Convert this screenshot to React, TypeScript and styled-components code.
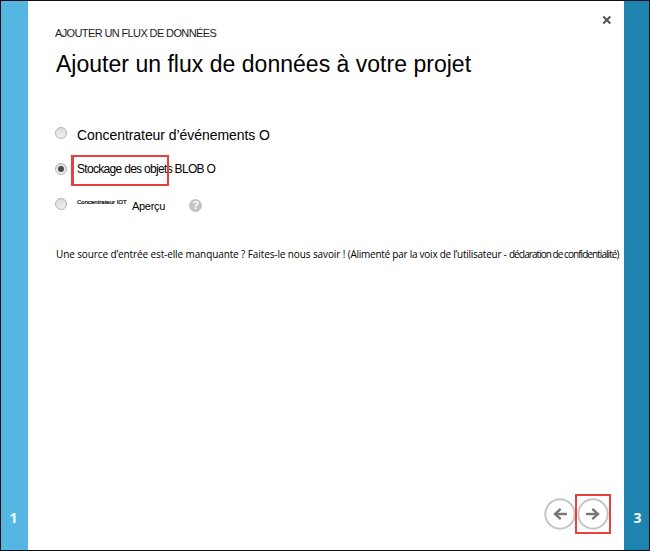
import React from "react";
import styled, { createGlobalStyle } from "styled-components";

const GlobalStyle = createGlobalStyle`
  body { margin: 0; background: #fff; }
  *, *::before, *::after { box-sizing: border-box; }
`;

const Dialog = styled.div`
  width: 650px;
  height: 551px;
  display: grid;
  grid-template-columns: 27px 1fr 25px;
  border: 1px solid #101014;
  background: #fff;
  color: #000;
  font-family: "Liberation Sans", Arial, sans-serif;
`;

const StepBar = styled.aside<{ $color: string; $left?: number; $right?: number }>`
  display: flex;
  align-items: flex-end;
  justify-content: center;
  padding: 0 ${(p) => p.$right ?? 0}px 22px ${(p) => p.$left ?? 0}px;
  background: ${(p) => p.$color};
  color: #f3fbff;
  font: 700 14px/20px "Open Sans", "Noto Sans", sans-serif;
`;

const Panel = styled.main`
  display: flex;
  flex-direction: column;
  padding: 0 13px 16px 27px;
  min-width: 0;
`;

const TopRow = styled.div`
  display: flex;
  justify-content: space-between;
  height: 40px;
`;

const Line = styled.span<{ $size: number; $spacing?: number; $font?: string }>`
  display: block;
  white-space: pre;
  font-size: ${(p) => p.$size}px;
  letter-spacing: ${(p) => p.$spacing ?? 0}px;
  ${(p) => p.$font && `font-family: ${p.$font};`}
`;

const Eyebrow = styled(Line)`
  padding-top: 25px;
  line-height: 15px;
  color: #1c1c1c;
`;

const CloseButton = styled.button`
  width: 10px;
  height: 10px;
  margin: 14px -1px 0 0;
  padding: 0;
  border: 0;
  background: none;
  display: flex;
`;

const Title = styled.h1`
  margin: 8px 0 0 1px;
  font-weight: 400;
  font-size: 23px;
  line-height: 30px;
  letter-spacing: 0.02px;
  white-space: nowrap;
`;

const Options = styled.div`
  display: flex;
  flex-direction: column;
  margin-top: 38px;
`;

const Option = styled.label<{ $height: number }>`
  display: flex;
  align-items: center;
  height: ${(p) => p.$height}px;
`;

const Radio = styled.span<{ $checked?: boolean }>`
  flex: none;
  display: grid;
  place-items: center;
  width: 12px;
  height: 12px;
  margin-right: 10px;
  border: 1px solid #b4b4b4;
  border-radius: 50%;
  background: linear-gradient(#dcdcdc, #f0f0f0);
  &::after {
    content: "";
    width: 6px;
    height: 6px;
    border-radius: 50%;
    background: ${(p) => (p.$checked ? "#4a4a4a" : "transparent")};
  }
`;

const EventLabel = styled(Line)`
  padding-top: 4px;
`;

const Highlighted = styled.span`
  position: relative;
  &::before {
    content: "";
    position: absolute;
    left: -6px;
    top: -7px;
    width: 98px;
    height: 31px;
    border: 2.5px solid #e8403b;
    border-width: 2px 2px 2px 3px;
  }
`;

const HubLabel = styled(Line)`
  width: 55px;
  padding-bottom: 5px;
  -webkit-text-stroke: 0.2px #000;
`;

const PreviewLabel = styled(Line)`
  width: 57px;
  padding-top: 3px;
`;

const Help = styled.span`
  display: grid;
  place-items: center;
  width: 13px;
  height: 13px;
  margin-top: 2px;
  border-radius: 50%;
  background: #c3c3c3;
  color: #fff;
  font: 700 11px/13px "Liberation Sans", sans-serif;
`;

const Hint = styled.p`
  display: flex;
  margin: 27px 0 0 1px;
  line-height: 16px;
`;

const Navigation = styled.nav`
  display: flex;
  justify-content: flex-end;
  align-items: center;
  margin-top: auto;
`;

const NavButton = styled.button<{ $marked?: boolean }>`
  display: grid;
  place-items: center;
  width: ${(p) => (p.$marked ? 36 : 31)}px;
  height: 40px;
  padding: 0;
  background: none;
  border: ${(p) => (p.$marked ? "2px solid #e8403b" : "0")};
`;

function Arrow({ back }: { back?: boolean }) {
  return (
    <svg width="32" height="32" viewBox="0 0 32 32" fill="none">
      <circle cx="16" cy="16" r="14.7" stroke="#c4c4c4" strokeWidth="2" />
      <g stroke="#777" strokeWidth="2.4" transform={back ? "matrix(-1 0 0 1 32 0)" : undefined}>
        <path d="M9 16H21" />
        <path d="M15.3 10.8L21 16L15.3 21.2" />
      </g>
    </svg>
  );
}

const ui = '"Open Sans", "Noto Sans", sans-serif';

export default function App() {
  return (
    <>
      <GlobalStyle />
      <Dialog>
        <StepBar $color="#54b6e1" $right={2}>1</StepBar>
        <Panel>
          <TopRow>
            <Eyebrow $size={11} $spacing={-0.62}>AJOUTER UN FLUX DE DONNÉES</Eyebrow>
            <CloseButton aria-label="Fermer">
              <svg width="10" height="10" viewBox="0 0 10 10" stroke="#555" strokeWidth="2.1">
                <path d="M1.3 1.6L8.3 8.4M8.3 1.6L1.3 8.4" />
              </svg>
            </CloseButton>
          </TopRow>
          <Title>Ajouter un flux de données à votre projet</Title>
          <Options>
            <Option $height={32}>
              <Radio />
              <EventLabel $size={14} $spacing={-0.06}>Concentrateur d’événements O</EventLabel>
            </Option>
            <Option $height={40}>
              <Radio $checked />
              <Highlighted>
                <Line $size={12} $spacing={-0.69}>Stockage des objets BLOB O</Line>
              </Highlighted>
            </Option>
            <Option $height={30}>
              <Radio />
              <HubLabel $size={6}>Concentrateur IOT</HubLabel>
              <PreviewLabel $size={11} $spacing={-0.3}>Aperçu</PreviewLabel>
              <Help>?</Help>
            </Option>
          </Options>
          <Hint>
            <Line $size={10} $spacing={-0.11} $font={ui}>Une source d’entrée est-elle manquante ? Faites-le nous savoir ! </Line>
            <Line $size={10} $spacing={-0.25} $font={ui}>(Alimenté par la voix de l’utilisateur - </Line>
            <Line $size={10} $spacing={-0.95} $font={ui}>déclaration de confidentialité)</Line>
          </Hint>
          <Navigation>
            <NavButton aria-label="Précédent"><Arrow back /></NavButton>
            <NavButton $marked aria-label="Suivant"><Arrow /></NavButton>
          </Navigation>
        </Panel>
        <StepBar $color="#1f83af" $left={2}>3</StepBar>
      </Dialog>
    </>
  );
}
